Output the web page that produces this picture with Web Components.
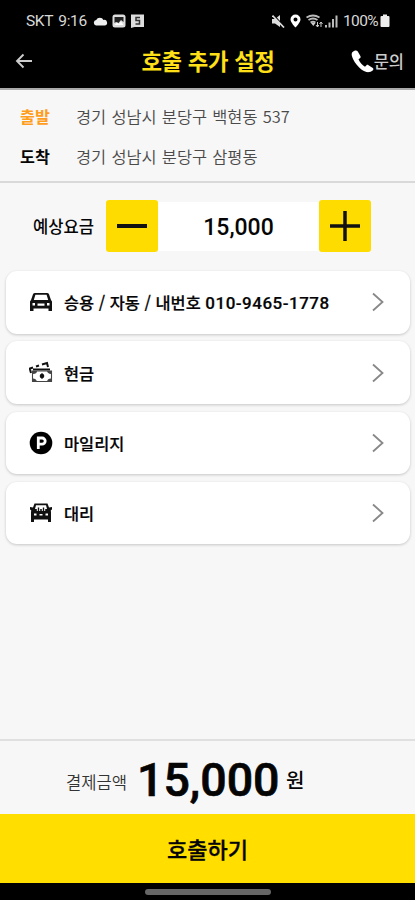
<!DOCTYPE html>
<html lang="ko"><head><meta charset="utf-8"><title>호출 추가 설정</title>
<style>
html,body{margin:0;height:100%}
body{background:#f7f7f7;color:#050505;font-family:Roboto,"Noto Sans CJK KR",sans-serif;overflow:hidden}
</style></head><body>
<call-app></call-app>
<script>
function define(name, html){
  const t=document.createElement('template');
  t.innerHTML='<style>*{box-sizing:border-box}svg{display:block;flex:none}span,slot{white-space:nowrap}</style>'+html;
  customElements.define(name,class extends HTMLElement{
    constructor(){super();this.attachShadow({mode:'open'}).append(t.content.cloneNode(true));}
  });
}
define('status-bar',`<style>
:host{display:flex;height:40px;padding:2px 25px 0 26px;align-items:center;color:#d8d8d8;font-size:15.5px;line-height:20px}
.t{width:67px;letter-spacing:-.35px;word-spacing:2px}.p{width:35px;letter-spacing:-.6px}
</style>
<span class="t">SKT 9:16</span>
<svg width="15" height="14" viewBox="0 0 15 14"><path fill="#eee" d="M3 11.500a2.800 2.800 0 0 1 .2-5.500A4 4 0 0 1 10.500 6a2.800 2.800 0 0 1 1.500 5.500z"/></svg>
<svg style="margin-left:4px" width="14" height="14" viewBox="0 0 14 14"><rect x=".5" y=".5" width="13" height="13" rx="2.500" fill="#ddd"/><path d="M2.500 3h9v5L9 6 6.500 9 4 8l-1.500 1z" fill="#222"/><path d="M2.500 11 5 8.500 7 10l2-2.500 2.500 3.500z" fill="#fff"/></svg>
<svg style="margin-left:5px" width="13" height="14" viewBox="0 0 13 14"><path fill="#ddd" d="M0 .5h13V13H3.500L0 14z"/><path d="M9 3.500H5v3h3.500v3.500H4.500" fill="none" stroke="#333" stroke-width="1.500"/></svg>
<svg style="margin-left:auto" width="13" height="14" viewBox="0 0 13 14"><path fill="#ddd" d="M0 5h3l5-4v12L3 9.500H0z"/><path d="M1.500 1l11 12" stroke="#000" stroke-width="1.500"/><path d="M.5 1.500l11.500 12" stroke="#ddd" stroke-width="1.700"/></svg>
<svg style="margin:0 5px 0 5px" width="11" height="14" viewBox="0 0 11 14"><path fill="#fff" fill-rule="evenodd" d="M5.500.5A5 5 0 0 0 .5 5.500C.5 8.500 5.500 13.500 5.500 13.500s5-5 5-8a5 5 0 0 0-5-5zm0 3a2 2 0 1 1 0 4 2 2 0 0 1 0-4z"/></svg>
<svg width="17" height="14" viewBox="0 0 17 14"><g fill="none" stroke="#bbb" stroke-width="1.800"><path d="M.5 3.500q6.500-4 13 0M2.500 6q4.500-3 9 0M4.500 8.500q2.500-1.500 5 0"/></g><path d="m5 9 2.300 3L9.500 9z" fill="#ccc"/><path d="M11.500 8v5m-1.500-2 1.500 2 1.300-2M15 13V8m-1.500 2L15 8l1.500 2" stroke="#ccc" fill="none"/></svg>
<svg style="margin:0 5px 0 2px" width="13" height="14" viewBox="0 0 13 14"><path fill="#bbb" d="M0 11h2v2.500H0zM3.500 8.500h2v5h-2zM7 5h2v8.500H7zM10.500 1.500h2v12h-2z"/></svg>
<span class="p">100%</span>
<svg style="margin-left:2px" width="10" height="14" viewBox="0 0 10 14"><path fill="#eee" d="M3 .5h4v1.500h1.500q1 0 1 1V12q0 1-1 1h-7q-1 0-1-1V3q0-1 1-1H3z"/></svg>`);
define('title-bar',`<style>
:host{display:grid;grid-template-columns:1fr auto 1fr;align-items:center;height:42px;padding:0 11px 0 15px}
.title{font:700 22.300px/30px "Noto Sans CJK KR",sans-serif;color:#ffe018;letter-spacing:-.3px;padding:0 3px 2px 0}
.ask{display:flex;justify-content:flex-end;align-items:center;color:#ccc;font:500 16.500px/24px "Noto Sans CJK KR",sans-serif}
</style>
<svg width="18" height="16" viewBox="0 0 18 16"><path d="M17 8H2M8.500 1.500 2 8l6.500 6.500" fill="none" stroke="#ccc" stroke-width="1.900"/></svg>
<span class="title">호출 추가 설정</span>
<div class="ask"><svg width="23" height="23" viewBox="0 0 23 23"><path fill="#fff" d="M3.500.8C1.500 1.500.5 3 .7 5c.5 5 8 15.500 14.800 17 2 .5 5-.3 6.500-1.800.6-.7.500-1.500-.2-2.100L17.500 15.200c-.7-.5-1.500-.4-2 .1l-1.500 1.500c-3-1.500-5.200-4.500-6.500-7.500L9.200 8c.5-.5.600-1 .3-1.700L6.800 1.500C6 .6 4.800.4 3.500.8z"/></svg><span>문의</span></div>`);
define('route-row',`<style>
:host{display:flex;height:40px;align-items:center;font:350 16.400px/24px Roboto,"Noto Sans CJK KR",sans-serif;color:#4a4a4a}
b{width:56px;font:700 16.200px/24px "Noto Sans CJK KR",sans-serif;color:var(--c,#050505)}
span{word-spacing:.7px;letter-spacing:-.02px;font-family:"Noto Sans CJK KR",sans-serif}
</style><b><slot name="label"></slot></b><span><slot></slot></span>`);
define('fare-stepper',`<style>
:host{display:flex;align-items:center;height:52px;margin-top:17px;padding-left:33px}
.l{width:73px;font:500 16.600px/24px "Noto Sans CJK KR",sans-serif}
.b{width:52px;height:52px;border-radius:3px;background:#ffdc00}
.n{width:161px;height:49px;background:#fff;text-align:center;font:500 23px/51px Roboto}
</style><span class="l">예상요금</span>
<div class="b"><svg width="52" height="52" viewBox="0 0 52 52"><path d="M11 26h30" stroke="#111" stroke-width="4"/></svg></div>
<div class="n">15,000</div>
<div class="b"><svg width="52" height="52" viewBox="0 0 52 52"><path d="M11 26h30M26 11v30" stroke="#111" stroke-width="3.500"/></svg></div>`);
define('option-card',`<style>
:host{display:flex;align-items:center;height:62.500px;padding:0 26px 0 23px;border-radius:11px;background:#fff;box-shadow:0 1px 3px #0003;font:500 16.400px/24px "Noto Sans CJK KR",sans-serif;-webkit-text-stroke:.2px #050505}
.i{width:35px}.c{margin-left:auto}
</style><div class="i"><slot name="icon"></slot></div><span><slot></slot></span>
<svg class="c" width="12" height="20" viewBox="0 0 12 20"><path d="m1 1.500 9.500 8.500L1 18.500" fill="none" stroke="#888" stroke-width="1.800"/></svg>`);
define('pay-total',`<style>
:host{display:flex;height:75px;border-top:2px solid #e0e0e0;padding-left:66px;align-items:center}
.l{width:71px;font:350 16.600px/24px "Noto Sans CJK KR",sans-serif;color:#333;padding-top:8px}
.n{width:149px;font:500 46.500px/54px Roboto;padding-top:4px;-webkit-text-stroke:.7px #050505}
.w{font:500 20px/28px "Noto Sans CJK KR",sans-serif;padding-top:4px}
</style><span class="l">결제금액</span><span class="n">15,000</span><span class="w">원</span>`);
define('call-app',`<style>
:host{display:flex;flex-direction:column;height:900px;width:415px}
header{height:88px;background:#000;flex:none}
.route{height:95px;padding:6px 20px 0;border-top:2px solid #aaa;border-bottom:2px solid #d9d9d9;flex:none}
.cards{display:flex;flex-direction:column;gap:7.800px;padding:19px 5px 0 6px}
pay-total{margin-top:auto;flex:none}
.go{height:69px;flex:none;background:#ffde00;text-align:center;font:500 22px/68px "Noto Sans CJK KR",sans-serif;-webkit-text-stroke:.3px #050505}
.nav{height:17px;flex:none;background:#000;padding-top:6px}
.nav div{width:126px;height:6px;border-radius:3px;background:#666;margin:0 auto}
.tel{font:500 17px Roboto;letter-spacing:.5px}
</style>
<header><status-bar></status-bar><title-bar></title-bar></header>
<div class="route"><route-row style="--c:#ff9d1c"><span slot="label">출발</span>경기 성남시 분당구 백현동 537</route-row>
<route-row><span slot="label">도착</span>경기 성남시 분당구 삼평동</route-row></div>
<fare-stepper></fare-stepper>
<div class="cards">
<option-card><svg slot="icon" width="24" height="24" viewBox="0 0 24 24"><path fill="#111" fill-rule="evenodd" d="M6 3h12q1.500 0 2 1.300L22 10l1 1.500V21h-3.500v-2.500h-15V21H1V11.500L2 10l2-5.700Q4.500 3 6 3zm.4 1.800L4.800 10h14.400l-1.600-5.200zM3.500 13v2.500h2.500V13zm14.500 0v2.500h2.500V13zM8.500 13.500v2.300h7v-2.300z"/></svg><span>승용 / 자동 / 내번호 <span class="tel">010-9465-1778</span></span></option-card>
<option-card><svg slot="icon" width="24" height="24" viewBox="0 0 24 24"><path d="M2 12 .8 7.500 4 6.500M7 5.500l3-1M13 3.500l5-1.500 1 4M4 8.500h17" fill="none" stroke="#111" stroke-width="2"/><path d="M3.500 10h19v10.500h-19z" fill="#fff" stroke="#444" stroke-width="1.100"/><path d="M4 10h4q0 3-4 3zM18 10h4v3q-3.500-.5-4-3zM4 17.500q3 0 4 3H4zM22 17.500v3h-4q.5-3 4-3z" fill="#444"/><circle cx="13" cy="15" r="2.300" fill="#111"/><path d="M13 12v6" stroke="#111"/></svg>현금</option-card>
<option-card><svg slot="icon" width="24" height="24" viewBox="0 0 24 24"><circle cx="12" cy="12" r="11.300" fill="#000"/><path d="M9.300 18V7h3.800a3 3 0 0 1 0 6.200H9.500" fill="none" stroke="#fff" stroke-width="2.800"/></svg>마일리지</option-card>
<option-card><svg slot="icon" width="24" height="24" viewBox="0 0 24 24"><path fill="#111" fill-rule="evenodd" d="M5.500 2.500h13L20 6.500l3-.5v2.500l-1.200.8.200 2.200V21h-3v-2.500H5V21H2v-9.500l.2-2.200L1 8.500V6l3 .5zM7 4.300 6 8h1.800v2h1V6.500h1.400V10h1V8h1.600v2h1V6.500h1.400V10h1V8H18l-1-3.700zM5 12.500v2h2.500v-2zm11.500 0v2H19v-2zM10.500 13v1.500h3V13z"/></svg>대리</option-card>
</div>
<pay-total></pay-total>
<div class="go">호출하기</div>
<div class="nav"><div></div></div>`);
</script>
</body></html>
